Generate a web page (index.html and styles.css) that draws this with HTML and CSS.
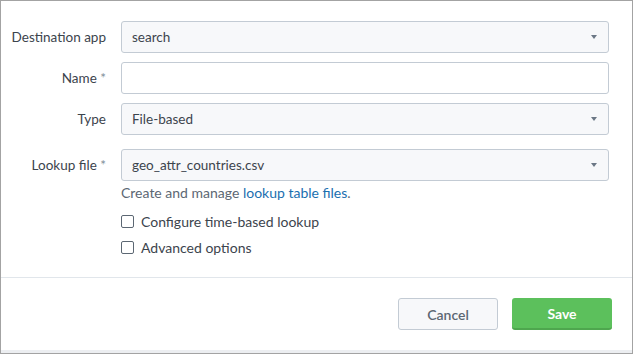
FILE: index.html
```html
<!DOCTYPE html>
<html>
  <head>
    <title>New Lookup Definition</title>
    <link rel="stylesheet" href="styles.css">
  </head>

  <body>
    <div id="dialog">
      <div id="form">
        <div class="row">
          <label class="label">Destination app</label>
          <div class="select">
            <span>search</span>
            <span class="caret"></span>
          </div>
        </div>

        <div class="row">
          <label class="label">Name <span class="req">*</span></label>
          <div class="input"></div>
        </div>

        <div class="row">
          <label class="label">Type</label>
          <div class="select">
            <span>File-based</span>
            <span class="caret"></span>
          </div>
        </div>

        <div class="row lookup">
          <label class="label">Lookup file <span class="req">*</span></label>
          <div class="select">
            <span>geo_attr_countries.csv</span>
            <span class="caret"></span>
          </div>
        </div>

        <div class="row help">
          <div></div>
          <div class="help-text">Create and manage <a href="#">lookup table files</a>.</div>
        </div>

        <div class="row check">
          <div></div>
          <label class="checkbox"><span class="box"></span>Configure time-based lookup</label>
        </div>
        <div class="row check">
          <div></div>
          <label class="checkbox"><span class="box"></span>Advanced options</label>
        </div>
      </div>

      <!-- Footer -->
      <div id="footer">
        <button class="btn cancel">Cancel</button>
        <button class="btn save">Save</button>
      </div>
      <div class="bottom-strip"></div>
    </div>
  </body>
</html>
```

FILE: styles.css
```css
body {
  margin: 0;
  background: #fff;
  font-family: Lato, "Open Sans", sans-serif;
  font-size: 13px;
  color: #3c444d;
}

#dialog {
  width: 631px;
  height: 352px;
  border: 1px solid #a3a3a3;
  display: flex;
  flex-direction: column;
}

#form {
  padding: 20px 23px 0 0;
  flex: 1 1 auto;
  border-bottom: 1px solid #e1e6eb;
}

.row {
  display: grid;
  grid-template-columns: 105px 1fr;
  column-gap: 15px;
  align-items: center;
  margin-bottom: 9px;
}

.row.lookup {
  margin-top: 14px;
  margin-bottom: 0;
}

.label {
  text-align: right;
  font-size: 13.5px;
}

.req {
  color: #818d99;
}

.select,
.input {
  height: 30px;
  border: 1px solid #c3cbd4;
  border-radius: 3px;
  box-sizing: content-box;
}

.select {
  background: #f7f8fa;
  display: flex;
  align-items: center;
  justify-content: space-between;
  padding: 0 11px 0 10px;
  font-size: 13.5px;
}

.input {
  background: #fff;
}

.caret {
  width: 0;
  height: 0;
  border-left: 3.5px solid transparent;
  border-right: 3.5px solid transparent;
  border-top: 4px solid #6b7785;
}

.row.help {
  margin: 3px 0 0;
}

.help-text {
  color: #5c6773;
  line-height: 18px;
  font-size: 14px;
}

.help-text a {
  color: #1a6fb0;
  text-decoration: none;
}

.row.check {
  margin-bottom: 0;
  height: 26px;
}

.row.help + .row.check {
  margin-top: 6px;
}

.checkbox {
  display: flex;
  align-items: center;
  font-size: 14px;
}

.checkbox .box {
  width: 11px;
  height: 11px;
  border: 1px solid #5c6773;
  border-radius: 2px;
  margin-right: 7px;
  background: #fff;
}

#footer {
  height: 72px;
  display: flex;
  justify-content: flex-end;
  align-items: center;
  gap: 14px;
  padding-right: 20px;
}

.btn {
  width: 100px;
  height: 32px;
  border-radius: 3px;
  font-family: inherit;
  font-size: 14px;
  cursor: pointer;
}

.btn.cancel {
  background: #f7f8fa;
  border: 1px solid #c3cbd4;
  color: #5c6773;
  font-weight: 600;
}

.btn.save {
  background: #5cc05c;
  border: none;
  border-bottom: 2px solid #4ea64e;
  color: #fff;
  font-weight: 700;
}

.bottom-strip {
  height: 3px;
  background: #eceef1;
}
```
